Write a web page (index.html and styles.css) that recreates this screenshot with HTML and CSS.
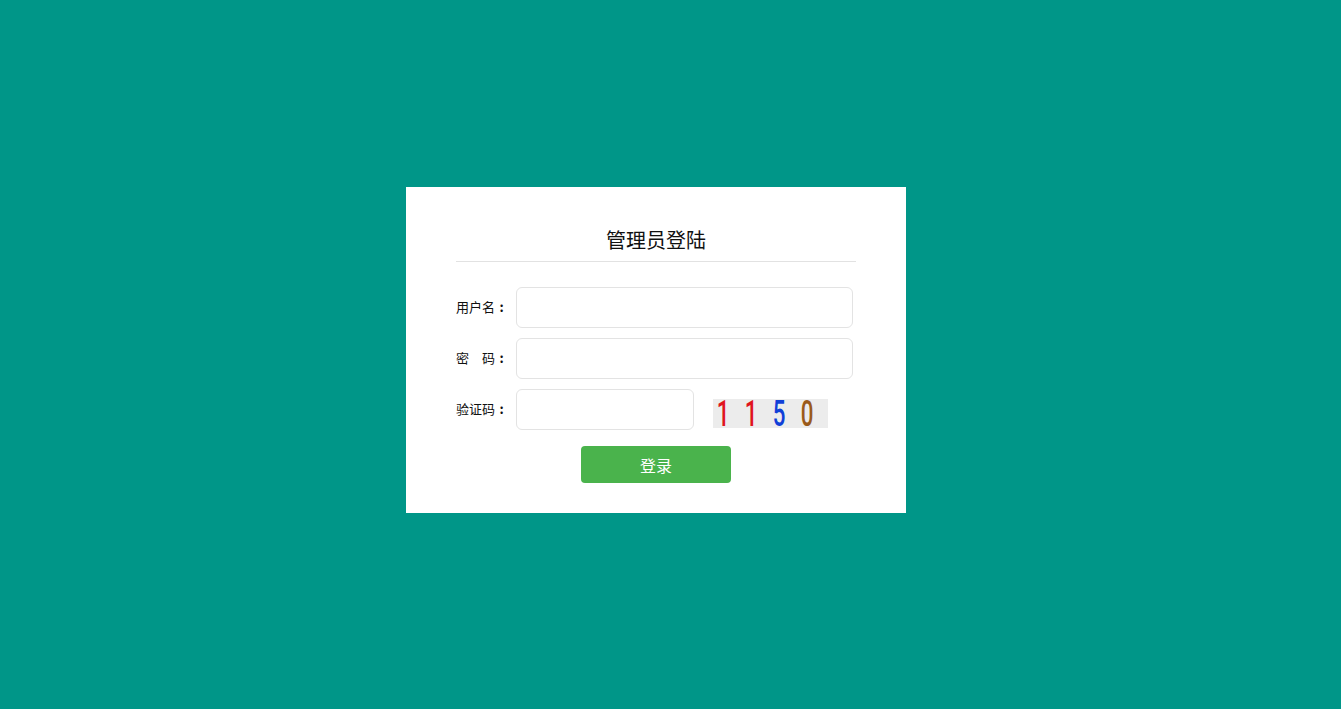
FILE: index.html
```html
<!DOCTYPE html>
<html lang="zh-CN">
<head>
<meta charset="utf-8">
<title>管理员登陆</title>
<link rel="stylesheet" href="styles.css">
</head>
<body>
<div class="page">
  <div class="card">
    <h2 class="title">管理员登陆</h2>
    <form class="form">
      <div class="row">
        <label class="label">用户名<span class="colon">:</span></label>
        <input class="input" type="text">
      </div>
      <div class="row">
        <label class="label">密&emsp;码<span class="colon">:</span></label>
        <input class="input" type="password">
      </div>
      <div class="row">
        <label class="label">验证码<span class="colon">:</span></label>
        <input class="input input-short" type="text">
        <div class="captcha"><span class="d d1">1</span><span class="d d2">1</span><span class="d d3">5</span><span class="d d4">0</span></div>
      </div>
      <div class="actions">
        <button class="btn" type="button">登录</button>
      </div>
    </form>
  </div>
</div>
</body>
</html>
```

FILE: styles.css
```css
html, body {
  margin: 0;
  padding: 0;
  background: #009688;
  font-family: "Noto Sans CJK SC", "Noto Sans", sans-serif;
}
.page {
  height: 709px;
  padding-top: 187px;
  padding-left: 406px;
  box-sizing: border-box;
}
.card {
  width: 500px;
  box-sizing: border-box;
  background: #fff;
  padding: 38px 50px 30px;
}
.title {
  margin: 0;
  font-size: 20px;
  font-weight: normal;
  line-height: 30px;
  text-align: center;
  color: #111;
  padding-bottom: 6px;
  border-bottom: 1px solid #e2e2e2;
}
.form {
  margin-top: 25px;
  display: flex;
  flex-direction: column;
  gap: 10px;
}
.row {
  display: flex;
  align-items: center;
  height: 41px;
}
.label {
  width: 60px;
  flex: none;
  font-size: 13px;
  line-height: 16px;
  color: #111;
  display: flex;
  align-items: center;
  margin-top: -2px;
}
.colon {
  display: inline-block;
  width: 13px;
  text-align: center;
  font-weight: bold;
}
.input {
  width: 337px;
  height: 41px;
  box-sizing: border-box;
  border: 1px solid #e3e3e3;
  border-radius: 6px;
  background: #fff;
  outline: none;
  padding: 0 10px;
  margin: 0;
}
.input-short {
  width: 178px;
}
.captcha {
  margin-left: 19px;
  width: 115px;
  height: 29px;
  background: #ececec;
  display: flex;
  align-items: center;
  font-family: Roboto, "Liberation Sans", sans-serif;
  font-size: 36px;
  font-weight: 500;
  line-height: 29px;
  margin-top: 8px;
}
.d {
  display: inline-block;
  width: 28px;
  text-align: center;
  transform: translateX(-4px) scaleX(0.62);
  margin-top: 1px;
}
.d1, .d2 { color: #e0141c; }
.d3 { color: #1040d8; }
.d4 { color: #9a5a1a; }
.actions {
  display: flex;
  justify-content: center;
  margin-top: 6px;
}
.btn {
  width: 150px;
  height: 37px;
  border: none;
  border-radius: 4px;
  background: #4ab34c;
  color: #fff;
  font-family: "Noto Sans CJK SC", sans-serif;
  font-size: 16px;
  cursor: pointer;
}
```
